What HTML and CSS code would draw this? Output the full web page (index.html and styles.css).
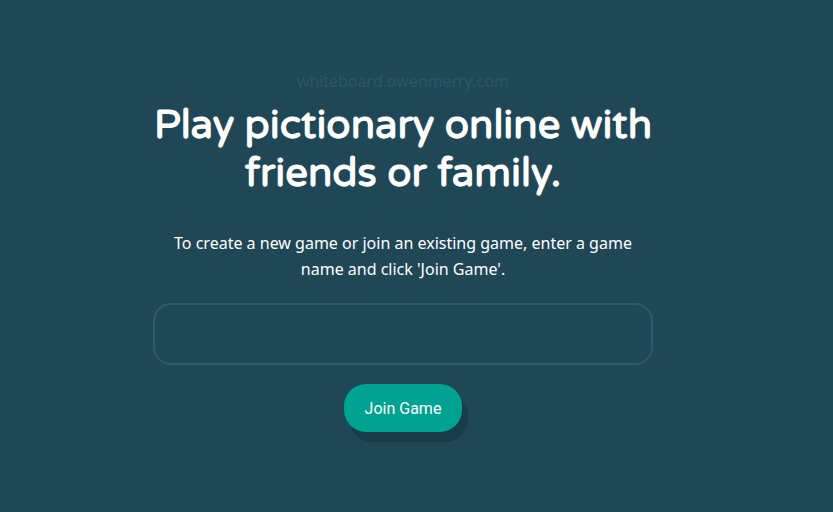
FILE: index.html
```html
<!DOCTYPE html>
<html>
<head>
<meta charset="utf-8">
<link rel="stylesheet" href="styles.css">
</head>
<body>
<main class="page">
  <div class="column">
    <div class="domain">whiteboard.owenmerry.com</div>
    <h1 class="title">Play pictionary online with friends or family.</h1>
    <p class="intro">To create a new game or join an existing game, enter a game name and click 'Join Game'.</p>
    <input class="name-input" type="text" aria-label="Game name">
    <button class="join-btn">Join Game</button>
  </div>
</main>
</body>
</html>
```
FILE: styles.css
```css
html, body {
  margin: 0;
  padding: 0;
  background: #1f4756;
  height: 100%;
}
.page {
  display: flex;
  justify-content: center;
  padding: 70px 27px 0 0;
}
.column {
  width: 500px;
  display: flex;
  flex-direction: column;
  align-items: center;
}
.domain {
  font-family: "Open Sans", sans-serif;
  font-size: 16px;
  line-height: 22px;
  color: #2c5868;
}
.title {
  margin: 9px 0 0 0;
  font-family: "Varela Round", "Nunito", "Open Sans", sans-serif;
  font-weight: 700;
  font-size: 40px;
  line-height: 48px;
  color: #ffffff;
  text-align: center;
}
.intro {
  margin: 33px 0 0 0;
  font-family: "Noto Sans", sans-serif;
  font-size: 16px;
  line-height: 26px;
  color: #ffffff;
  text-align: center;
  padding: 0 12px;
}
.name-input {
  margin-top: 21px;
  box-sizing: border-box;
  width: 500px;
  height: 62px;
  border: 2px solid #2b5b6d;
  border-radius: 18px;
  background: transparent;
  outline: none;
}
.join-btn {
  margin-top: 19px;
  height: 48px;
  padding: 0 21px;
  border: none;
  border-radius: 22px;
  background: #00a391;
  color: #ffffff;
  font-family: Roboto, sans-serif;
  font-size: 16px;
  box-shadow: 6px 10px 0 #1a3b48;
}
```
